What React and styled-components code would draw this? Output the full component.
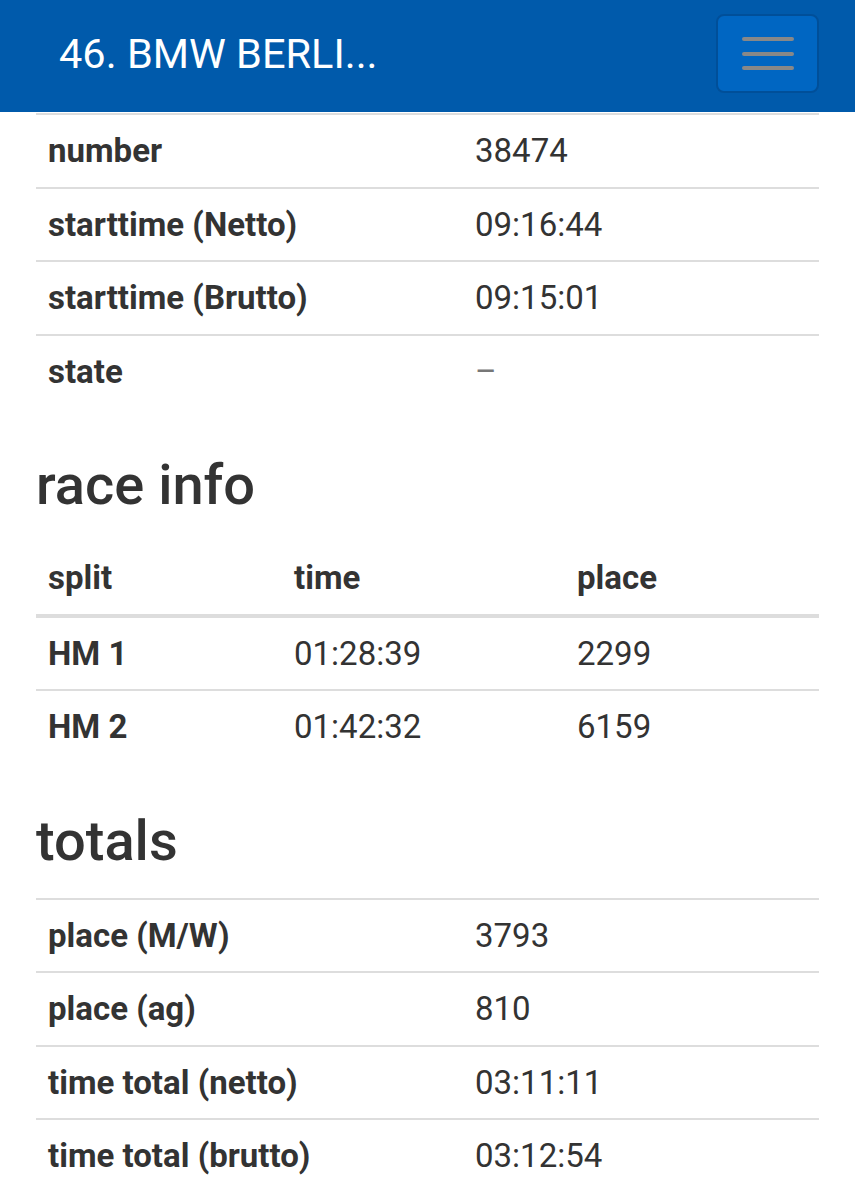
import React from 'react'
import styled, { createGlobalStyle } from 'styled-components'

const GlobalStyle = createGlobalStyle`
    body {
        margin: 0;
        background: #fff;
        font-family: Roboto, "Liberation Sans", sans-serif;
        color: #333;
    }
`

const NavBar = styled.header`
    position: fixed;
    top: 0;
    left: 0;
    right: 0;
    height: 112px;
    background-color: #005aab;
    display: flex;
    align-items: center;
    justify-content: space-between;
    padding: 0 36px 0 59px;
    z-index: 10;
`

const Brand = styled.div`
    color: #fff;
    font-size: 41.5px;
    margin-top: -6px;
    white-space: nowrap;
`

const MenuButton = styled.button`
    width: 103px;
    height: 79px;
    margin-top: -5px;
    background-color: #0066c2;
    border: 2px solid #004f99;
    border-radius: 8px;
    display: flex;
    flex-direction: column;
    align-items: center;
    justify-content: center;
    gap: 10.5px;
    padding: 0;
`

const Bar = styled.span`
    display: block;
    width: 52px;
    height: 4px;
    border-radius: 2px;
    background-color: #888;
`

const Page = styled.main`
    padding: 113px 36px 40px;
`

const Table = styled.table`
    width: 100%;
    border-collapse: collapse;
    font-size: 33px;
    table-layout: fixed;
`

const Row = styled.tr`
    border-top: 2px solid #ddd;
    &:first-child {
        border-top: ${p => (p.$noTop ? 'none' : '2px solid #ddd')};
    }
`

const HeadRow = styled.tr`
    border-bottom: 4px solid #ddd;
`

const Cell = styled.td`
    box-sizing: border-box;
    padding: 14px 12px 14px;
    line-height: 43.5px;
    text-align: left;
    font-weight: ${p => (p.$bold ? 700 : 400)};
    width: ${p => p.$w || 'auto'};
    vertical-align: middle;
`

const Heading = styled.h3`
    font-size: 56px;
    font-weight: 500;
    line-height: 60px;
    margin: 48px 0 27px;
`

const Muted = styled.span`
    color: #777;
`

const details = [
    ['number', '38474'],
    ['starttime (Netto)', '09:16:44'],
    ['starttime (Brutto)', '09:15:01'],
    ['state', <Muted>–</Muted>],
]

const splits = [
    ['HM 1', '01:28:39', '2299'],
    ['HM 2', '01:42:32', '6159'],
]

const totals = [
    ['place (M/W)', '3793'],
    ['place (ag)', '810'],
    ['time total (netto)', '03:11:11'],
    ['time total (brutto)', '03:12:54'],
]

const KeyValueTable = ({ rows }) => (
    <Table>
        <tbody>
            {rows.map(([label, value]) => (
                <Row key={label}>
                    <Cell $bold $w="427px">{label}</Cell>
                    <Cell>{value}</Cell>
                </Row>
            ))}
        </tbody>
    </Table>
)

const App = () => {
    return (
        <>
            <GlobalStyle />
            <NavBar>
                <Brand>46. BMW BERLI...</Brand>
                <MenuButton aria-label="menu">
                    <Bar />
                    <Bar />
                    <Bar />
                </MenuButton>
            </NavBar>
            <Page>
                <KeyValueTable rows={details} />

                <Heading>race info</Heading>
                <Table>
                    <thead>
                        <HeadRow>
                            <Cell as="th" $bold $w="246px">split</Cell>
                            <Cell as="th" $bold $w="283px">time</Cell>
                            <Cell as="th" $bold>place</Cell>
                        </HeadRow>
                    </thead>
                    <tbody>
                        {splits.map(([split, time, place]) => (
                            <Row key={split} $noTop>
                                <Cell $bold>{split}</Cell>
                                <Cell>{time}</Cell>
                                <Cell>{place}</Cell>
                            </Row>
                        ))}
                    </tbody>
                </Table>

                <Heading>totals</Heading>
                <KeyValueTable rows={totals} />
            </Page>
        </>
    )
}

export default App
